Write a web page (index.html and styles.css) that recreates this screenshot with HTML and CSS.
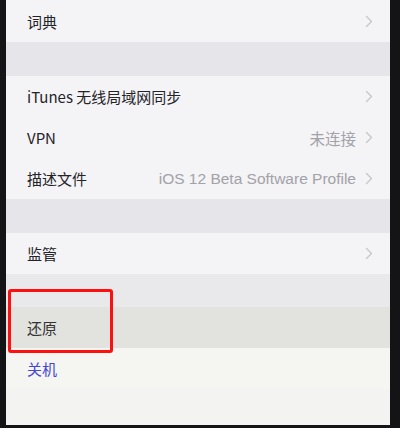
FILE: index.html
```html
<!DOCTYPE html>
<html>
<head>
<meta charset="utf-8">
<link rel="stylesheet" href="styles.css">
</head>
<body>
<div class="frame">
  <div class="screen">
    <div class="row"><span class="label">词典</span><svg class="chev" viewBox="0 0 8 13"><polyline points="1.5,1.5 6.5,6.5 1.5,11.5"/></svg></div>
    <div class="gap"></div>
    <div class="row"><span class="label">iTunes 无线局域网同步</span><svg class="chev" viewBox="0 0 8 13"><polyline points="1.5,1.5 6.5,6.5 1.5,11.5"/></svg></div>
    <div class="row"><span class="label">VPN</span><span class="value">未连接</span><svg class="chev" viewBox="0 0 8 13"><polyline points="1.5,1.5 6.5,6.5 1.5,11.5"/></svg></div>
    <div class="row"><span class="label">描述文件</span><span class="value">iOS 12 Beta Software Profile</span><svg class="chev" viewBox="0 0 8 13"><polyline points="1.5,1.5 6.5,6.5 1.5,11.5"/></svg></div>
    <div class="gap"></div>
    <div class="row"><span class="label">监管</span><svg class="chev" viewBox="0 0 8 13"><polyline points="1.5,1.5 6.5,6.5 1.5,11.5"/></svg></div>
    <div class="gap short"></div>
    <div class="row reset"><span class="label">还原</span></div>
    <div class="row off"><span class="label blue">关机</span></div>
    <div class="rest"></div>
    <div class="redbox"></div>
  </div>
</div>
</body>
</html>
```
FILE: styles.css
```css
html, body {
  margin: 0;
  padding: 0;
  background: #141416;
}
.frame {
  width: 400px;
  height: 428px;
  padding: 0 10px 3px 6px;
  box-sizing: border-box;
  display: flex;
}
.screen {
  position: relative;
  flex: 1;
  display: flex;
  flex-direction: column;
  background: #f3f2f5;
  font-family: "Noto Sans CJK SC", "Liberation Sans", sans-serif;
  overflow: hidden;
}
.row {
  height: 41px;
  flex: none;
  display: flex;
  align-items: center;
  padding: 0 0 0 21px;
  background: #f4f3f6;
  color: #242428;
  font-size: 15px;
}
.row:first-child {
  height: 42px;
}
.label {
  flex: 1;
  white-space: nowrap;
}
.value {
  color: #a2a2a8;
  font-family: "Liberation Sans", "Noto Sans CJK SC", sans-serif;
  font-size: 15.5px;
  margin-right: 9px;
}
.chev {
  width: 8px;
  height: 13px;
  margin-right: 17px;
  flex: none;
  fill: none;
  stroke: #c6c6cb;
  stroke-width: 1.4;
  stroke-linecap: round;
  stroke-linejoin: round;
}
.gap {
  height: 34px;
  flex: none;
  background: #e6e5ea;
}
.gap.short {
  height: 33px;
  background: #e9e8eb;
}
.reset {
  background: #e2e2df;
  color: #333;
}
.off {
  background: #f5f5f1;
}
.blue {
  color: #4646d6;
}
.rest {
  flex: 1;
  background: #f3f3f1;
}
.redbox {
  position: absolute;
  left: 2px;
  top: 289px;
  width: 99px;
  height: 58px;
  border: 3px solid #ff1010;
  border-radius: 3px;
}
```
